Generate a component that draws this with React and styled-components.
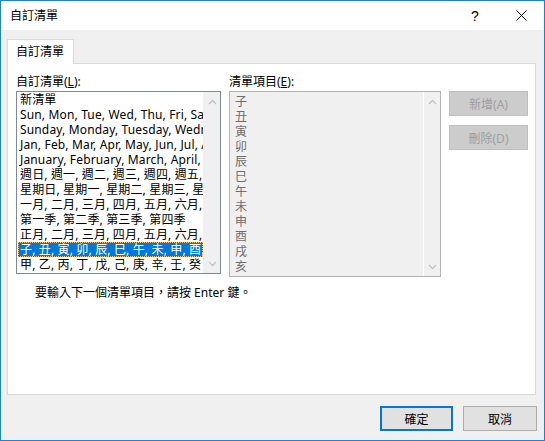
import React from 'react';
import styled, { createGlobalStyle } from 'styled-components';

const GlobalStyle = createGlobalStyle`
  html, body {
    margin: 0;
    padding: 0;
    background: #ffffff;
  }
  body {
    font-family: "Noto Sans", "Noto Sans CJK TC", sans-serif;
    font-size: 12px;
    color: #000000;
  }
`;

const customLists = [
  '新清單',
  'Sun, Mon, Tue, Wed, Thu, Fri, Sat',
  'Sunday, Monday, Tuesday, Wednesday, Thursday, Friday, Saturday',
  'Jan, Feb, Mar, Apr, May, Jun, Jul, Aug, Sep, Oct, Nov, Dec',
  'January, February, March, April, May, June, July, August',
  '週日, 週一, 週二, 週三, 週四, 週五, 週六',
  '星期日, 星期一, 星期二, 星期三, 星期四, 星期五, 星期六',
  '一月, 二月, 三月, 四月, 五月, 六月, 七月, 八月',
  '第一季, 第二季, 第三季, 第四季',
  '正月, 二月, 三月, 四月, 五月, 六月, 七月, 八月',
  '子, 丑, 寅, 卯, 辰, 巳, 午, 未, 申, 酉, 戌, 亥',
  '甲, 乙, 丙, 丁, 戊, 己, 庚, 辛, 壬, 癸',
];

const entries = ['子', '丑', '寅', '卯', '辰', '巳', '午', '未', '申', '酉', '戌', '亥'];

const Window = styled.div`
  width: 545px;
  height: 441px;
  box-sizing: border-box;
  border: 1px solid #1883d7;
  display: flex;
  flex-direction: column;
  background: #f0f0f0;
  overflow: hidden;
`;

const TitleBar = styled.div`
  height: 29px;
  flex: none;
  background: #ffffff;
  display: flex;
  align-items: center;
  padding-left: 9px;
`;

const Title = styled.div`
  flex: 1;
  font-size: 12px;
  line-height: 16px;
`;

const CaptionButton = styled.div`
  width: ${({ wide }) => wide}px;
  height: 29px;
  display: flex;
  align-items: center;
  justify-content: center;
  font-family: "Liberation Sans", "Noto Sans", sans-serif;
  font-size: 14px;
`;

const Body = styled.div`
  flex: 1;
  display: flex;
  flex-direction: column;
  padding: 9px 8px 0 6px;
`;

const TabStrip = styled.div`
  display: flex;
  height: 24px;
`;

const Tab = styled.div`
  position: relative;
  z-index: 1;
  width: 67px;
  height: 25px;
  box-sizing: border-box;
  border: 1px solid #d9d9d9;
  border-bottom: none;
  background: #ffffff;
  padding: 4px 0 0 8px;
  line-height: 16px;
`;

const Panel = styled.div`
  height: 332px;
  box-sizing: border-box;
  border: 1px solid #d9d9d9;
  background: #ffffff;
  padding: 10px 8px 0 8px;
`;

const Columns = styled.div`
  display: grid;
  grid-template-columns: 205px 212px 79px;
  grid-template-rows: 17px auto;
  column-gap: 8px;
  align-items: start;
`;

const FieldLabel = styled.div`
  line-height: 16px;
  white-space: nowrap;
`;

const Key = styled.span`
  text-decoration: underline;
  text-underline-offset: 1px;
`;

const ListBox = styled.div`
  height: ${({ tall }) => tall}px;
  box-sizing: border-box;
  border: 1px solid ${({ disabled }) => (disabled ? '#b4b4b4' : '#828790')};
  background: ${({ disabled }) => (disabled ? '#f0f0f0' : '#ffffff')};
  display: flex;
  overflow: hidden;
`;

const Rows = styled.div`
  flex: 1;
  min-width: 0;
  padding: ${({ disabled }) => (disabled ? '2px 0 0 3px' : '0 0 0 1px')};
  overflow: hidden;
  letter-spacing: 0.15px;
`;

const Row = styled.div`
  height: 15px;
  line-height: 15px;
  padding-left: 2px;
  white-space: nowrap;
  overflow: hidden;
  box-sizing: border-box;
  color: ${({ selected, disabled }) => (selected ? '#ffffff' : disabled ? '#6d6d6d' : '#000000')};
  background: ${({ selected }) => (selected ? '#0078d7' : 'transparent')};
  outline: ${({ selected }) => (selected ? '1px dotted #f5c27a' : 'none')};
  outline-offset: -1px;
`;

const ScrollBar = styled.div`
  width: 17px;
  flex: none;
  background: #f0f0f0;
  border-left: 1px solid ${({ disabled }) => (disabled ? '#ffffff' : '#f0f0f0')};
  display: flex;
  flex-direction: column;
  justify-content: space-between;
  align-items: center;
  padding: 7px 0 6px;
  box-sizing: border-box;
`;

const Buttons = styled.div`
  display: flex;
  flex-direction: column;
  gap: 9px;
`;

const SideButton = styled.div`
  height: 25px;
  box-sizing: border-box;
  border: 1px solid #bfbfbf;
  background: #cccccc;
  color: #9f9f9f;
  display: flex;
  align-items: center;
  justify-content: center;
`;

const Hint = styled.div`
  margin: 8px 0 0 19px;
  line-height: 16px;
`;

const Footer = styled.div`
  display: flex;
  justify-content: flex-end;
  gap: 10px;
  padding: 11px 0 0;
  margin-right: -1px;
`;

const DialogButton = styled.div`
  width: ${({ wide }) => wide}px;
  height: 25px;
  box-sizing: border-box;
  border: ${({ primary }) => (primary ? '2px solid #0078d7' : '1px solid #adadad')};
  background: #e1e1e1;
  display: flex;
  align-items: center;
  justify-content: center;
`;

function Chevron({ down }) {
  return (
    <svg width="9" height="6" viewBox="0 0 9 6">
      <path
        d={down ? 'M1 1 L4.5 4.5 L8 1' : 'M1 5 L4.5 1.5 L8 5'}
        fill="none"
        stroke="#c2c2c2"
        strokeWidth="1.3"
      />
    </svg>
  );
}

function CloseIcon() {
  return (
    <svg width="11" height="11" viewBox="0 0 11 11">
      <path d="M0.5 0.5 L10.5 10.5 M10.5 0.5 L0.5 10.5" stroke="#000" strokeWidth="1" />
    </svg>
  );
}

export default function App() {
  return (
    <>
      <GlobalStyle />
      <Window>
        <TitleBar>
          <Title>自訂清單</Title>
          <CaptionButton wide={46}>?</CaptionButton>
          <CaptionButton wide={46}><CloseIcon /></CaptionButton>
        </TitleBar>
        <Body>
          <TabStrip>
            <Tab>自訂清單</Tab>
          </TabStrip>
          <Panel>
            <Columns>
              <FieldLabel>自訂清單(<Key>L</Key>):</FieldLabel>
              <FieldLabel>清單項目(<Key>E</Key>):</FieldLabel>
              <div />
              <ListBox tall={183}>
                <Rows>
                  {customLists.map((item, i) => (
                    <Row key={item} selected={i === 10}>{item}</Row>
                  ))}
                </Rows>
                <ScrollBar>
                  <Chevron />
                  <Chevron down />
                </ScrollBar>
              </ListBox>
              <ListBox tall={186} disabled>
                <Rows disabled>
                  {entries.map((item) => (
                    <Row key={item} disabled>{item}</Row>
                  ))}
                </Rows>
                <ScrollBar disabled>
                  <Chevron />
                  <Chevron down />
                </ScrollBar>
              </ListBox>
              <Buttons>
                <SideButton>新增(A)</SideButton>
                <SideButton>刪除(D)</SideButton>
              </Buttons>
            </Columns>
            <Hint>要輸入下一個清單項目，請按 Enter 鍵。</Hint>
          </Panel>
          <Footer>
            <DialogButton primary wide={73}>確定</DialogButton>
            <DialogButton wide={74}>取消</DialogButton>
          </Footer>
        </Body>
      </Window>
    </>
  );
}
